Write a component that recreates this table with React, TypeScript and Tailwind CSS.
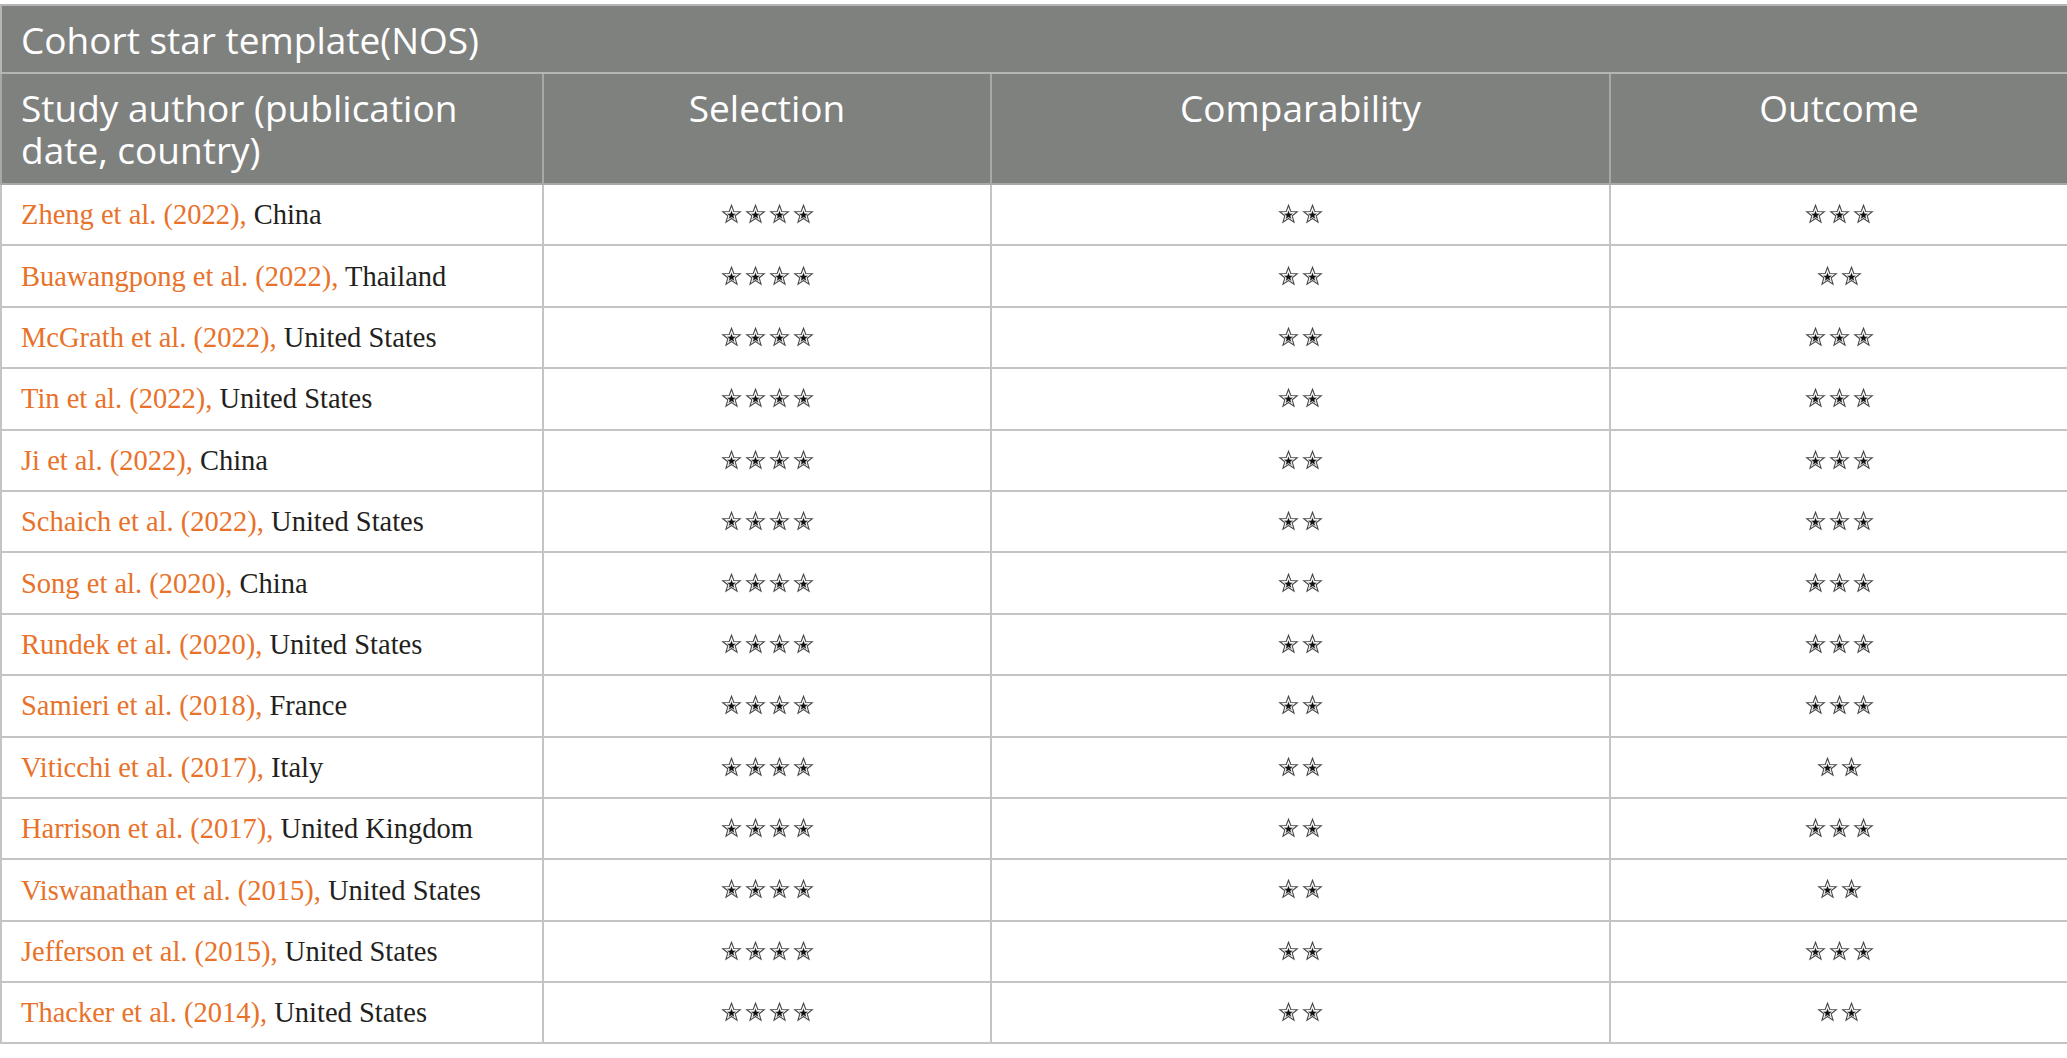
import React from 'react';

// Newcastle-Ottawa quality scores for the cohort studies
type Row = { author: string; country: string; sel: number; comp: number; out: number };

const rows: Row[] = [
  { author: 'Zheng et al. (2022),', country: 'China', sel: 4, comp: 2, out: 3 },
  { author: 'Buawangpong et al. (2022),', country: 'Thailand', sel: 4, comp: 2, out: 2 },
  { author: 'McGrath et al. (2022),', country: 'United States', sel: 4, comp: 2, out: 3 },
  { author: 'Tin et al. (2022),', country: 'United States', sel: 4, comp: 2, out: 3 },
  { author: 'Ji et al. (2022),', country: 'China', sel: 4, comp: 2, out: 3 },
  { author: 'Schaich et al. (2022),', country: 'United States', sel: 4, comp: 2, out: 3 },
  { author: 'Song et al. (2020),', country: 'China', sel: 4, comp: 2, out: 3 },
  { author: 'Rundek et al. (2020),', country: 'United States', sel: 4, comp: 2, out: 3 },
  { author: 'Samieri et al. (2018),', country: 'France', sel: 4, comp: 2, out: 3 },
  { author: 'Viticchi et al. (2017),', country: 'Italy', sel: 4, comp: 2, out: 2 },
  { author: 'Harrison et al. (2017),', country: 'United Kingdom', sel: 4, comp: 2, out: 3 },
  { author: 'Viswanathan et al. (2015),', country: 'United States', sel: 4, comp: 2, out: 2 },
  { author: 'Jefferson et al. (2015),', country: 'United States', sel: 4, comp: 2, out: 3 },
  { author: 'Thacker et al. (2014),', country: 'United States', sel: 4, comp: 2, out: 2 },
];

const OUTER = '12,1.5 14.6,8.6 22,8.9 16.2,13.5 18.3,20.8 12,16.6 5.7,20.8 7.8,13.5 2,8.9 9.4,8.6';

function Star() {
  return (
    <svg width="21" height="21" viewBox="0 0 24 24" className="block">
      <polygon points={OUTER} fill="#fff" stroke="#4a4a4a" strokeWidth="1.3" strokeLinejoin="miter" />
      <polygon
        points={OUTER}
        fill="#111"
        stroke="#fff"
        strokeWidth="0.8"
        transform="translate(12 12.6) scale(0.55) translate(-12 -12)"
      />
    </svg>
  );
}

function Stars({ n }: { n: number }) {
  return (
    <div className="flex items-center justify-center gap-[3px]">
      {Array.from({ length: n }).map((_, i) => (
        <Star key={i} />
      ))}
    </div>
  );
}

const head = "font-['Open_Sans',sans-serif] text-white";

export default function App() {
  return (
    <div className="min-h-screen bg-white pt-[4px]">
      <table className="w-[2067px] table-fixed border-collapse">
        <colgroup>
          <col className="w-[542px]" />
          <col className="w-[448px]" />
          <col className="w-[619px]" />
          <col className="w-[458px]" />
        </colgroup>
        <thead>
          <tr className="h-[68px] bg-[#7f817f]">
            <th
              colSpan={4}
              className={`${head} border-2 border-[#b4b6b4] px-[19px] pt-[2px] text-left align-middle text-[37px] font-normal leading-[42px]`}
            >
              Cohort star template(NOS)
            </th>
          </tr>
          <tr className="h-[111px] bg-[#7f817f]">
            <th
              className={`${head} border-2 border-[#a7a9a7] px-[19px] pt-[13px] text-left align-top text-[37px] font-normal leading-[42px]`}
            >
              Study author (publication date, country)
            </th>
            <th className={`${head} border-2 border-[#a7a9a7] pt-[13px] align-top text-[37px] font-normal leading-[42px]`}>
              Selection
            </th>
            <th className={`${head} border-2 border-[#a7a9a7] pt-[13px] align-top text-[37px] font-normal leading-[42px]`}>
              Comparability
            </th>
            <th className={`${head} border-2 border-[#a7a9a7] pt-[13px] align-top text-[37px] font-normal leading-[42px]`}>
              Outcome
            </th>
          </tr>
        </thead>
        <tbody className="font-['Liberation_Serif',serif] text-[28.5px]">
          {rows.map((r) => (
            <tr key={r.author} className="h-[61.4px]">
              <td className="border-2 border-[#c4c4c4] px-[19px] pt-[2px] align-middle">
                <span className="text-[#e8722a]">{r.author}</span>{' '}
                <span className="text-[#231f20]">{r.country}</span>
              </td>
              <td className="border-2 border-[#c4c4c4] align-middle">
                <Stars n={r.sel} />
              </td>
              <td className="border-2 border-[#c4c4c4] align-middle">
                <Stars n={r.comp} />
              </td>
              <td className="border-2 border-[#c4c4c4] align-middle">
                <Stars n={r.out} />
              </td>
            </tr>
          ))}
        </tbody>
      </table>
    </div>
  );
}
